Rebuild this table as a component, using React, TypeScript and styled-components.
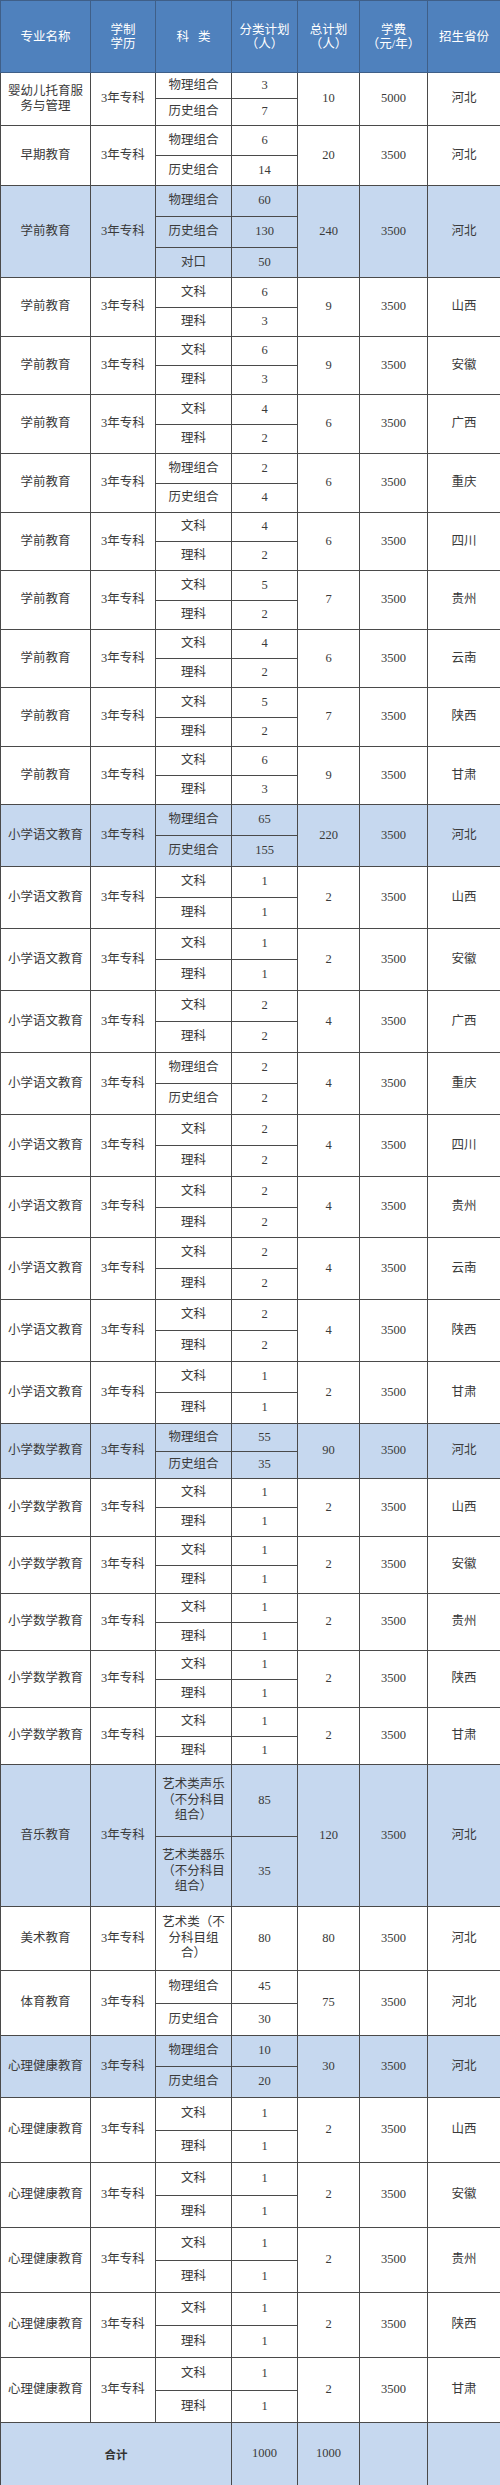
import React from "react";
import styled, { createGlobalStyle } from "styled-components";

const Global = createGlobalStyle`
  html, body { margin: 0; padding: 0; background: #ffffff; }
  body { font-family: "Liberation Serif", "Noto Sans CJK SC", serif; }
`;

const Table = styled.table`
  width: 500px;
  table-layout: fixed;
  border-collapse: collapse;
  font-family: "Liberation Serif", "Noto Sans CJK SC", serif;
  font-size: 12.5px;
  color: #3a3a3a;
`;

const HeadRow = styled.tr`
  height: 72px;
  background: #4f81bd;
`;

const HeadCell = styled.th`
  border: 1px solid #3f5f88;
  padding: 0;
  color: #ffffff;
  font-weight: 400;
  font-size: 12.5px;
  line-height: 14px;
  text-align: center;
  vertical-align: middle;
`;

const Row = styled.tr<{ $h: number; $blue?: boolean }>`
  height: ${(p) => p.$h}px;
  background: ${(p) => (p.$blue ? "#c6d8ef" : "#ffffff")};
`;

const Cell = styled.td`
  border: 1px solid #4a4a4a;
  padding: 0 2px;
  text-align: center;
  vertical-align: middle;
  line-height: 15.5px;
`;

const TotalLabel = styled.td`
  border: 1px solid #4a4a4a;
  padding: 0;
  text-align: center;
  vertical-align: middle;
  font-size: 11.5px;
  font-weight: 700;
  color: #333;
`;

const Spaced = styled.span`
  letter-spacing: 9px;
`;

type Sub = [React.ReactNode, string];
type Group = {
  name: React.ReactNode;
  prov: string;
  subs: Sub[];
  total: string;
  fee: string;
  h: number;
  blue?: boolean;
  hs?: number[];
};

const WL = (a: string, b: string): Sub[] => [
  ["文科", a],
  ["理科", b],
];
const WH = (a: string, b: string): Sub[] => [
  ["物理组合", a],
  ["历史组合", b],
];

const groups: Group[] = [
  { name: <>婴幼儿托育服<br />务与管理</>, prov: "河北", subs: WH("3", "7"), total: "10", fee: "5000", h: 53, hs: [26, 27] },
  { name: "早期教育", prov: "河北", subs: WH("6", "14"), total: "20", fee: "3500", h: 60 },
  { name: "学前教育", prov: "河北", subs: [["物理组合", "60"], ["历史组合", "130"], ["对口", "50"]], total: "240", fee: "3500", h: 92, blue: true, hs: [31, 31, 30] },
  { name: "学前教育", prov: "山西", subs: WL("6", "3"), total: "9", fee: "3500", h: 59 },
  { name: "学前教育", prov: "安徽", subs: WL("6", "3"), total: "9", fee: "3500", h: 58 },
  { name: "学前教育", prov: "广西", subs: WL("4", "2"), total: "6", fee: "3500", h: 59 },
  { name: "学前教育", prov: "重庆", subs: WH("2", "4"), total: "6", fee: "3500", h: 59 },
  { name: "学前教育", prov: "四川", subs: WL("4", "2"), total: "6", fee: "3500", h: 58 },
  { name: "学前教育", prov: "贵州", subs: WL("5", "2"), total: "7", fee: "3500", h: 59 },
  { name: "学前教育", prov: "云南", subs: WL("4", "2"), total: "6", fee: "3500", h: 58 },
  { name: "学前教育", prov: "陕西", subs: WL("5", "2"), total: "7", fee: "3500", h: 59 },
  { name: "学前教育", prov: "甘肃", subs: WL("6", "3"), total: "9", fee: "3500", h: 58 },
  { name: "小学语文教育", prov: "河北", subs: WH("65", "155"), total: "220", fee: "3500", h: 62, blue: true },
  { name: "小学语文教育", prov: "山西", subs: WL("1", "1"), total: "2", fee: "3500", h: 62 },
  { name: "小学语文教育", prov: "安徽", subs: WL("1", "1"), total: "2", fee: "3500", h: 62 },
  { name: "小学语文教育", prov: "广西", subs: WL("2", "2"), total: "4", fee: "3500", h: 62 },
  { name: "小学语文教育", prov: "重庆", subs: WH("2", "2"), total: "4", fee: "3500", h: 62 },
  { name: "小学语文教育", prov: "四川", subs: WL("2", "2"), total: "4", fee: "3500", h: 62 },
  { name: "小学语文教育", prov: "贵州", subs: WL("2", "2"), total: "4", fee: "3500", h: 61 },
  { name: "小学语文教育", prov: "云南", subs: WL("2", "2"), total: "4", fee: "3500", h: 62 },
  { name: "小学语文教育", prov: "陕西", subs: WL("2", "2"), total: "4", fee: "3500", h: 62 },
  { name: "小学语文教育", prov: "甘肃", subs: WL("1", "1"), total: "2", fee: "3500", h: 62 },
  { name: "小学数学教育", prov: "河北", subs: WH("55", "35"), total: "90", fee: "3500", h: 55, blue: true },
  { name: "小学数学教育", prov: "山西", subs: WL("1", "1"), total: "2", fee: "3500", h: 58 },
  { name: "小学数学教育", prov: "安徽", subs: WL("1", "1"), total: "2", fee: "3500", h: 57 },
  { name: "小学数学教育", prov: "贵州", subs: WL("1", "1"), total: "2", fee: "3500", h: 57 },
  { name: "小学数学教育", prov: "陕西", subs: WL("1", "1"), total: "2", fee: "3500", h: 57 },
  { name: "小学数学教育", prov: "甘肃", subs: WL("1", "1"), total: "2", fee: "3500", h: 57 },
  {
    name: "音乐教育",
    prov: "河北",
    subs: [
      [<>艺术类声乐<br />（不分科目<br />组合）</>, "85"],
      [<>艺术类器乐<br />（不分科目<br />组合）</>, "35"],
    ],
    total: "120",
    fee: "3500",
    h: 142,
    blue: true,
    hs: [72, 70],
  },
  { name: "美术教育", prov: "河北", subs: [[<>艺术类（不<br />分科目组<br />合）</>, "80"]], total: "80", fee: "3500", h: 64 },
  { name: "体育教育", prov: "河北", subs: WH("45", "30"), total: "75", fee: "3500", h: 65, hs: [33, 32] },
  { name: "心理健康教育", prov: "河北", subs: WH("10", "20"), total: "30", fee: "3500", h: 62, blue: true },
  { name: "心理健康教育", prov: "山西", subs: WL("1", "1"), total: "2", fee: "3500", h: 65 },
  { name: "心理健康教育", prov: "安徽", subs: WL("1", "1"), total: "2", fee: "3500", h: 65 },
  { name: "心理健康教育", prov: "贵州", subs: WL("1", "1"), total: "2", fee: "3500", h: 65 },
  { name: "心理健康教育", prov: "陕西", subs: WL("1", "1"), total: "2", fee: "3500", h: 65 },
  { name: "心理健康教育", prov: "甘肃", subs: WL("1", "1"), total: "2", fee: "3500", h: 65 },
];

const splitHeights = (g: Group): number[] => {
  if (g.hs) return g.hs;
  const n = g.subs.length;
  const base = Math.floor(g.h / n);
  const out: number[] = [];
  let rest = g.h - base * n;
  for (let i = 0; i < n; i++) {
    out.push(base + (rest > 0 ? 1 : 0));
    if (rest > 0) rest--;
  }
  return out;
};

const widths = [90, 65, 76, 66, 62, 68, 73];

export default function App() {
  return (
    <>
      <Global />
      <Table>
        <colgroup>
          {widths.map((w, i) => (
            <col key={i} width={w} />
          ))}
        </colgroup>
        <thead>
          <HeadRow>
            <HeadCell>专业名称</HeadCell>
            <HeadCell>
              学制
              <br />
              学历
            </HeadCell>
            <HeadCell>
              <Spaced>科</Spaced>类
            </HeadCell>
            <HeadCell>
              分类计划
              <br />
              （人）
            </HeadCell>
            <HeadCell>
              总计划
              <br />
              （人）
            </HeadCell>
            <HeadCell>
              学费
              <br />
              （元/年）
            </HeadCell>
            <HeadCell>招生省份</HeadCell>
          </HeadRow>
        </thead>
        <tbody>
          {groups.map((g, gi) => {
            const hs = splitHeights(g);
            const n = g.subs.length;
            return g.subs.map((s, si) => (
              <Row key={`${gi}-${si}`} $h={hs[si]} $blue={g.blue}>
                {si === 0 && (
                  <>
                    <Cell rowSpan={n}>{g.name}</Cell>
                    <Cell rowSpan={n}>3年专科</Cell>
                  </>
                )}
                <Cell>{s[0]}</Cell>
                <Cell>{s[1]}</Cell>
                {si === 0 && (
                  <>
                    <Cell rowSpan={n}>{g.total}</Cell>
                    <Cell rowSpan={n}>{g.fee}</Cell>
                    <Cell rowSpan={n}>{g.prov}</Cell>
                  </>
                )}
              </Row>
            ));
          })}
          <Row $h={63} $blue>
            <TotalLabel colSpan={3}>合计</TotalLabel>
            <Cell>1000</Cell>
            <Cell>1000</Cell>
            <Cell />
            <Cell />
          </Row>
        </tbody>
      </Table>
    </>
  );
}
